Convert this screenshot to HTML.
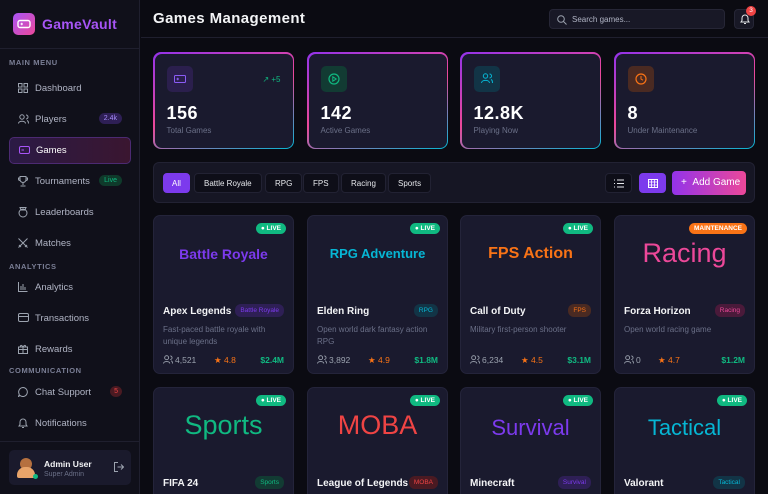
<!DOCTYPE html>
<html style="height:494px;overflow:hidden"><head><meta charset="utf-8"><style>
*{box-sizing:border-box;margin:0;padding:0}
html{background:#0b0b12}
body{width:768px;height:494px;overflow:hidden;background:#0b0b12;font-family:"Liberation Sans",sans-serif;color:#e5e7eb;position:relative}
.sb{position:absolute;left:0;top:0;width:140px;height:494px;background:#10101a;border-right:1px solid #1f1f2e}
.logo{position:absolute;left:13px;top:13px;width:22px;height:22px;border-radius:5px;background:linear-gradient(135deg,#a855f7,#ec4899)}
.brand{position:absolute;left:42px;top:16px;font-size:14px;font-weight:bold;color:#a855f7;letter-spacing:.3px}
.sbl{position:absolute;left:0;top:48px;width:140px;border-top:1px solid #1f1f2e}
.sec{position:absolute;left:9px;font-size:7.5px;color:#7b7f96;font-weight:bold;letter-spacing:.6px}
.it{position:absolute;left:9px;width:122px;height:27px;font-size:9.5px;color:#b0b4c4;display:flex;align-items:center;padding-left:26px}
.it svg{position:absolute;left:9px;top:8px}
.it.act{background:linear-gradient(90deg,#2b1a45,#3a1630);border:1px solid #4c2a72;border-radius:5px;color:#fff}
.bd{position:absolute;right:9px;top:7px;font-size:7px;padding:2px 5px;border-radius:7px}
.user{position:absolute;left:9px;top:450px;width:122px;height:35px;background:#1a1a2c;border-radius:5px}
.hd{position:absolute;left:141px;top:0;right:0;height:38px;border-bottom:1px solid #1f1f2e}
.ttl{position:absolute;left:12px;top:10px;font-size:15px;font-weight:bold;color:#f3f4f6;letter-spacing:.4px}
.srch{position:absolute;left:408px;top:9px;width:176px;height:20px;background:#181826;border:1px solid #262636;border-radius:4px;font-size:8px;color:#b0b4c4;padding:5px 0 0 22px}
.bell{position:absolute;left:593px;top:9px;width:20px;height:20px;background:#181826;border:1px solid #262636;border-radius:4px}
.st{position:absolute;top:52px;width:141px;height:97px;border-radius:8px;padding:1.5px;background:linear-gradient(160deg,#9333ea,#ec4899 50%,#06b6d4)}
.st>div{width:100%;height:100%;background:#1a1a2e;border-radius:7px;position:relative}
.ic{position:absolute;left:12px;top:12px;width:26px;height:26px;border-radius:5px;display:flex;align-items:center;justify-content:center}
.num{position:absolute;left:12px;top:49px;font-size:18px;font-weight:bold;color:#fff;letter-spacing:.5px}
.lab{position:absolute;left:12px;top:72px;font-size:8px;color:#6b7088}
.fb{position:absolute;left:153px;top:162px;width:602px;height:41px;background:#161624;border:1px solid #222233;border-radius:6px}
.ch{position:absolute;top:10px;height:20px;background:#0e0e18;border:1px solid #222233;border-radius:4px;font-size:8px;color:#e5e7eb;padding:5px 9px 0}
.gc{position:absolute;width:141px;height:159px;background:#1a1a2e;border:1px solid #24243a;border-radius:7px;overflow:hidden}
.gc.b{height:107px;border-bottom:none;border-radius:7px 7px 0 0}
.gt{position:absolute;left:0;right:0;text-align:center;top:30px;font-size:14px}
.live{position:absolute;right:7px;top:7px;background:#10b981;color:#fff;font-size:6.5px;font-weight:bold;padding:2px 5px 2px 5px;border-radius:6px}
.gn{position:absolute;left:9px;top:90px;font-size:10px;font-weight:bold;color:#f3f4f6}
.tag{position:absolute;right:9px;top:88px;font-size:6.5px;padding:3px 5px;border-radius:6px}
.ds{position:absolute;left:9px;top:108px;width:120px;font-size:8px;color:#6b7088;line-height:12px}
.ft{position:absolute;left:9px;right:9px;top:139px;font-size:8.5px;color:#9ca3af}
.ft .r{color:#f97316;position:absolute;left:51px}
.ft .m{color:#10b981;position:absolute;right:0;font-weight:bold}
.pp{display:inline-block;vertical-align:-1px;margin-right:2px}
</style></head><body>
<svg width="0" height="0" style="position:absolute"><symbol id="pp" viewBox="0 0 11 10"><circle cx="4" cy="3" r="2.2" fill="none" stroke="#9ca3af"/><path d="M0.5 9.5c0-3 7-3 7 0M8 1a2 2 0 010 4M9 6.5c1.5.5 1.5 2 1.5 3" fill="none" stroke="#9ca3af"/></symbol></svg>
<div class="sb">
<div class="logo"><svg width="22" height="22" viewBox="0 0 22 22"><rect x="5" y="7.5" width="12" height="7" rx="2" fill="none" stroke="#fff" stroke-width="1.4"/><path d="M7.5 11h2.5M8.7 9.8v2.4" stroke="#fff" stroke-width="1"/></svg></div>
<div class="brand">GameVault</div>
<div class="sbl"></div>
<div class="sec" style="top:58px">MAIN MENU</div>
<div class="it" style="top:75px"><svg width="10" height="10"><rect x="0.5" y="0.5" width="3.5" height="3.5" fill="none" stroke="#9ca3af"/><rect x="6" y="0.5" width="3.5" height="3.5" fill="none" stroke="#9ca3af"/><rect x="0.5" y="6" width="3.5" height="3.5" fill="none" stroke="#9ca3af"/><rect x="6" y="6" width="3.5" height="3.5" fill="none" stroke="#9ca3af"/></svg>Dashboard</div>
<div class="it" style="top:106px"><svg width="11" height="10"><use href="#pp"/></svg>Players<span class="bd" style="background:#2e1f55;color:#a78bfa">2.4k</span></div>
<div class="it act" style="top:137px"><svg width="11" height="8"><rect x="0.5" y="0.5" width="10" height="7" rx="1.5" fill="none" stroke="#a855f7"/><path d="M2.5 4h2.5" stroke="#a855f7"/></svg>Games</div>
<div class="it" style="top:168px"><svg width="10" height="11"><path d="M2 0.5h6v3a3 3 0 01-6 0zM5 6.5v2.5M2.5 10h5M2 2H0.5v1a1.5 1.5 0 001.5 1.5M8 2h1.5v1A1.5 1.5 0 018 4.5" fill="none" stroke="#9ca3af"/></svg>Tournaments<span class="bd" style="background:#0f3a2b;color:#10b981">Live</span></div>
<div class="it" style="top:199px"><svg width="10" height="11"><circle cx="5" cy="6" r="4" fill="none" stroke="#9ca3af"/><path d="M2 0.5h6l-1 2.5H3z" fill="none" stroke="#9ca3af"/></svg>Leaderboards</div>
<div class="it" style="top:230px"><svg width="10" height="10"><path d="M0.5 0.5l9 9M9.5 0.5l-9 9M1 7l2 2M9 7l-2 2" stroke="#9ca3af"/></svg>Matches</div>
<div class="sec" style="top:262px">ANALYTICS</div>
<div class="it" style="top:274px"><svg width="10" height="10"><path d="M0.5 0v9.5h9M3 8V4M5 8V2M7 8V5" stroke="#9ca3af" fill="none"/></svg>Analytics</div>
<div class="it" style="top:305px"><svg width="11" height="9"><rect x="0.5" y="0.5" width="10" height="8" rx="1.5" fill="none" stroke="#9ca3af"/><path d="M0.5 3.5h10" stroke="#9ca3af"/></svg>Transactions</div>
<div class="it" style="top:336px"><svg width="10" height="10"><rect x="0.5" y="3" width="9" height="6.5" fill="none" stroke="#9ca3af"/><path d="M5 3v6.5M0.5 5.5h9M5 3C3 0 1.5 2 3 3M5 3c2-3 3.5-1 2 0" fill="none" stroke="#9ca3af"/></svg>Rewards</div>
<div class="sec" style="top:366px">COMMUNICATION</div>
<div class="it" style="top:379px"><svg width="10" height="10"><path d="M5 0.5a4.5 4.5 0 11-3 8L0.5 9.5l.8-2.2A4.5 4.5 0 015 0.5z" fill="none" stroke="#9ca3af"/></svg>Chat Support<span class="bd" style="background:#4a1a22;color:#ef4444;border-radius:50%;padding:2px 4px">5</span></div>
<div class="it" style="top:410px"><svg width="10" height="11"><path d="M1 8h8L8 6.5V4a3 3 0 00-6 0v2.5zM4 9.5h2" fill="none" stroke="#9ca3af"/></svg>Notifications</div>
<div style="position:absolute;left:0;top:441px;width:140px;border-top:1px solid #1f1f2e"></div>
<div class="user">
<div style="position:absolute;left:11px;top:8px;width:12px;height:12px;border-radius:50%;background:#b5703f"></div>
<div style="position:absolute;left:8px;top:17px;width:18px;height:11px;border-radius:8px 8px 2px 2px;background:#e8a46a"></div>
<div style="position:absolute;left:24px;top:24px;width:5px;height:5px;border-radius:50%;background:#10b981"></div>
<div style="position:absolute;left:35px;top:9px;font-size:8.5px;font-weight:bold;color:#f3f4f6">Admin User</div>
<div style="position:absolute;left:35px;top:21px;font-size:7px;color:#6b7088">Super Admin</div>
<svg style="position:absolute;left:105px;top:12px" width="10" height="10"><path d="M4 0.5H0.5v9H4M3.5 5h6M7 2.5L9.5 5 7 7.5" fill="none" stroke="#9ca3af"/></svg>
</div>
</div>
<div class="hd">
<div class="ttl">Games Management</div>
<div class="srch"><svg style="position:absolute;left:7px;top:5px" width="10" height="10"><circle cx="4" cy="4" r="3.3" fill="none" stroke="#9ca3af"/><path d="M6.5 6.5L9.5 9.5" stroke="#9ca3af"/></svg>Search games...</div>
<div class="bell"><svg style="position:absolute;left:5px;top:4px" width="10" height="11"><path d="M1 8h8L8 6.5V4a3 3 0 00-6 0v2.5zM4 9.5h2" fill="none" stroke="#e5e7eb"/></svg><div style="position:absolute;left:11px;top:-4px;width:10px;height:10px;border-radius:50%;background:#ef4444;color:#fff;font-size:6.5px;text-align:center;line-height:10px">3</div></div>
</div>

<div class="st" style="left:153px"><div><div class="ic" style="background:#2b1f4d"><svg width="12" height="8"><rect x="0.5" y="0.5" width="11" height="7" rx="1" fill="none" stroke="#8b5cf6"/><path d="M2.5 4h2.5M3.7 2.8v2.4" stroke="#8b5cf6"/></svg></div><div style="position:absolute;right:12px;top:21px;font-size:8px;color:#10b981">↗ +5</div><div class="num">156</div><div class="lab">Total Games</div></div></div>
<div class="st" style="left:307px"><div><div class="ic" style="background:#123b33"><svg width="12" height="12"><circle cx="6" cy="6" r="5" fill="none" stroke="#10b981" stroke-width="1.2"/><path d="M4.8 3.8v4.4L8.2 6z" fill="none" stroke="#10b981"/></svg></div><div class="num">142</div><div class="lab">Active Games</div></div></div>
<div class="st" style="left:460px"><div><div class="ic" style="background:#123446"><svg width="12" height="11"><circle cx="4.5" cy="3" r="2.2" fill="none" stroke="#06b6d4"/><path d="M0.5 10c0-3.5 8-3.5 8 0M8.5 1a2 2 0 010 4M10 6.5c1.5.5 1.5 2 1.5 3.5" fill="none" stroke="#06b6d4"/></svg></div><div class="num">12.8K</div><div class="lab">Playing Now</div></div></div>
<div class="st" style="left:614px"><div><div class="ic" style="background:#4a2a22"><svg width="12" height="12"><circle cx="6" cy="6" r="5" fill="none" stroke="#f97316" stroke-width="1.2"/><path d="M6 3v3l2 1.2" fill="none" stroke="#f97316"/></svg></div><div class="num">8</div><div class="lab">Under Maintenance</div></div></div>

<div class="fb">
<div class="ch" style="left:9px;background:#7c3aed;border-color:#7c3aed;color:#fff;padding:5px 8px 0">All</div>
<div class="ch" style="left:40px">Battle Royale</div>
<div class="ch" style="left:111px">RPG</div>
<div class="ch" style="left:149px">FPS</div>
<div class="ch" style="left:187px">Racing</div>
<div class="ch" style="left:234px">Sports</div>
<div class="ch" style="left:451px;width:27px;padding:0"><svg style="position:absolute;left:8px;top:5px" width="10" height="9"><path d="M0 1h1M3 1h7M0 4.5h1M3 4.5h7M0 8h1M3 8h7" stroke="#e5e7eb"/></svg></div>
<div class="ch" style="left:485px;width:27px;padding:0;background:#7c3aed;border-color:#7c3aed"><svg style="position:absolute;left:8px;top:5px" width="10" height="9"><rect x="0.5" y="0.5" width="9" height="8" fill="none" stroke="#fff"/><path d="M3.5 0v9M6.5 0v9M0 3h10M0 6h10" stroke="#fff" stroke-width=".8"/></svg></div>
<div class="ch" style="left:518px;top:8px;height:24px;width:74px;border:none;background:linear-gradient(90deg,#9333ea,#ec4899);color:#fff;font-size:10px;padding:6px 0 0 9px">+ &nbsp;Add Game</div>
</div>

<div class="gc" style="left:153px;top:215px"><div class="live">● LIVE</div><div class="gt" style="color:#7c3aed;font-weight:bold">Battle Royale</div><div class="gn">Apex Legends</div><div class="tag" style="background:#2e1f55;color:#7c3aed">Battle Royale</div><div class="ds">Fast-paced battle royale with unique legends</div><div class="ft"><svg class="pp" width="10" height="9"><use href="#pp"/></svg>4,521<span class="r">★ 4.8</span><span class="m">$2.4M</span></div></div>
<div class="gc" style="left:307px;top:215px"><div class="live">● LIVE</div><div class="gt" style="color:#06b6d4;font-size:13px;font-weight:bold">RPG Adventure</div><div class="gn">Elden Ring</div><div class="tag" style="background:#123446;color:#06b6d4">RPG</div><div class="ds">Open world dark fantasy action RPG</div><div class="ft"><svg class="pp" width="10" height="9"><use href="#pp"/></svg>3,892<span class="r">★ 4.9</span><span class="m">$1.8M</span></div></div>
<div class="gc" style="left:460px;top:215px"><div class="live">● LIVE</div><div class="gt" style="color:#f97316;font-size:16px;top:29px;font-weight:bold">FPS Action</div><div class="gn">Call of Duty</div><div class="tag" style="background:#4a2a22;color:#f97316">FPS</div><div class="ds">Military first-person shooter</div><div class="ft"><svg class="pp" width="10" height="9"><use href="#pp"/></svg>6,234<span class="r">★ 4.5</span><span class="m">$3.1M</span></div></div>
<div class="gc" style="left:614px;top:215px"><div class="live" style="background:#f97316">MAINTENANCE</div><div class="gt" style="color:#ec4899;font-size:27px;top:22px">Racing</div><div class="gn">Forza Horizon</div><div class="tag" style="background:#4a1a3a;color:#ec4899">Racing</div><div class="ds">Open world racing game</div><div class="ft"><svg class="pp" width="10" height="9"><use href="#pp"/></svg>0<span class="r" style="left:34px">★ 4.7</span><span class="m">$1.2M</span></div></div>

<div class="gc b" style="left:153px;top:387px"><div class="live">● LIVE</div><div class="gt" style="color:#10b981;font-size:27px;top:22px">Sports</div><div class="gn">FIFA 24</div><div class="tag" style="background:#123b33;color:#10b981">Sports</div></div>
<div class="gc b" style="left:307px;top:387px"><div class="live">● LIVE</div><div class="gt" style="color:#ef4444;font-size:27px;top:22px">MOBA</div><div class="gn">League of Legends</div><div class="tag" style="background:#4a1a22;color:#ef4444">MOBA</div></div>
<div class="gc b" style="left:460px;top:387px"><div class="live">● LIVE</div><div class="gt" style="color:#7c3aed;font-size:22px;top:27px">Survival</div><div class="gn">Minecraft</div><div class="tag" style="background:#2e1f55;color:#7c3aed">Survival</div></div>
<div class="gc b" style="left:614px;top:387px"><div class="live">● LIVE</div><div class="gt" style="color:#06b6d4;font-size:22px;top:27px">Tactical</div><div class="gn">Valorant</div><div class="tag" style="background:#123446;color:#06b6d4">Tactical</div></div>
</body></html>
